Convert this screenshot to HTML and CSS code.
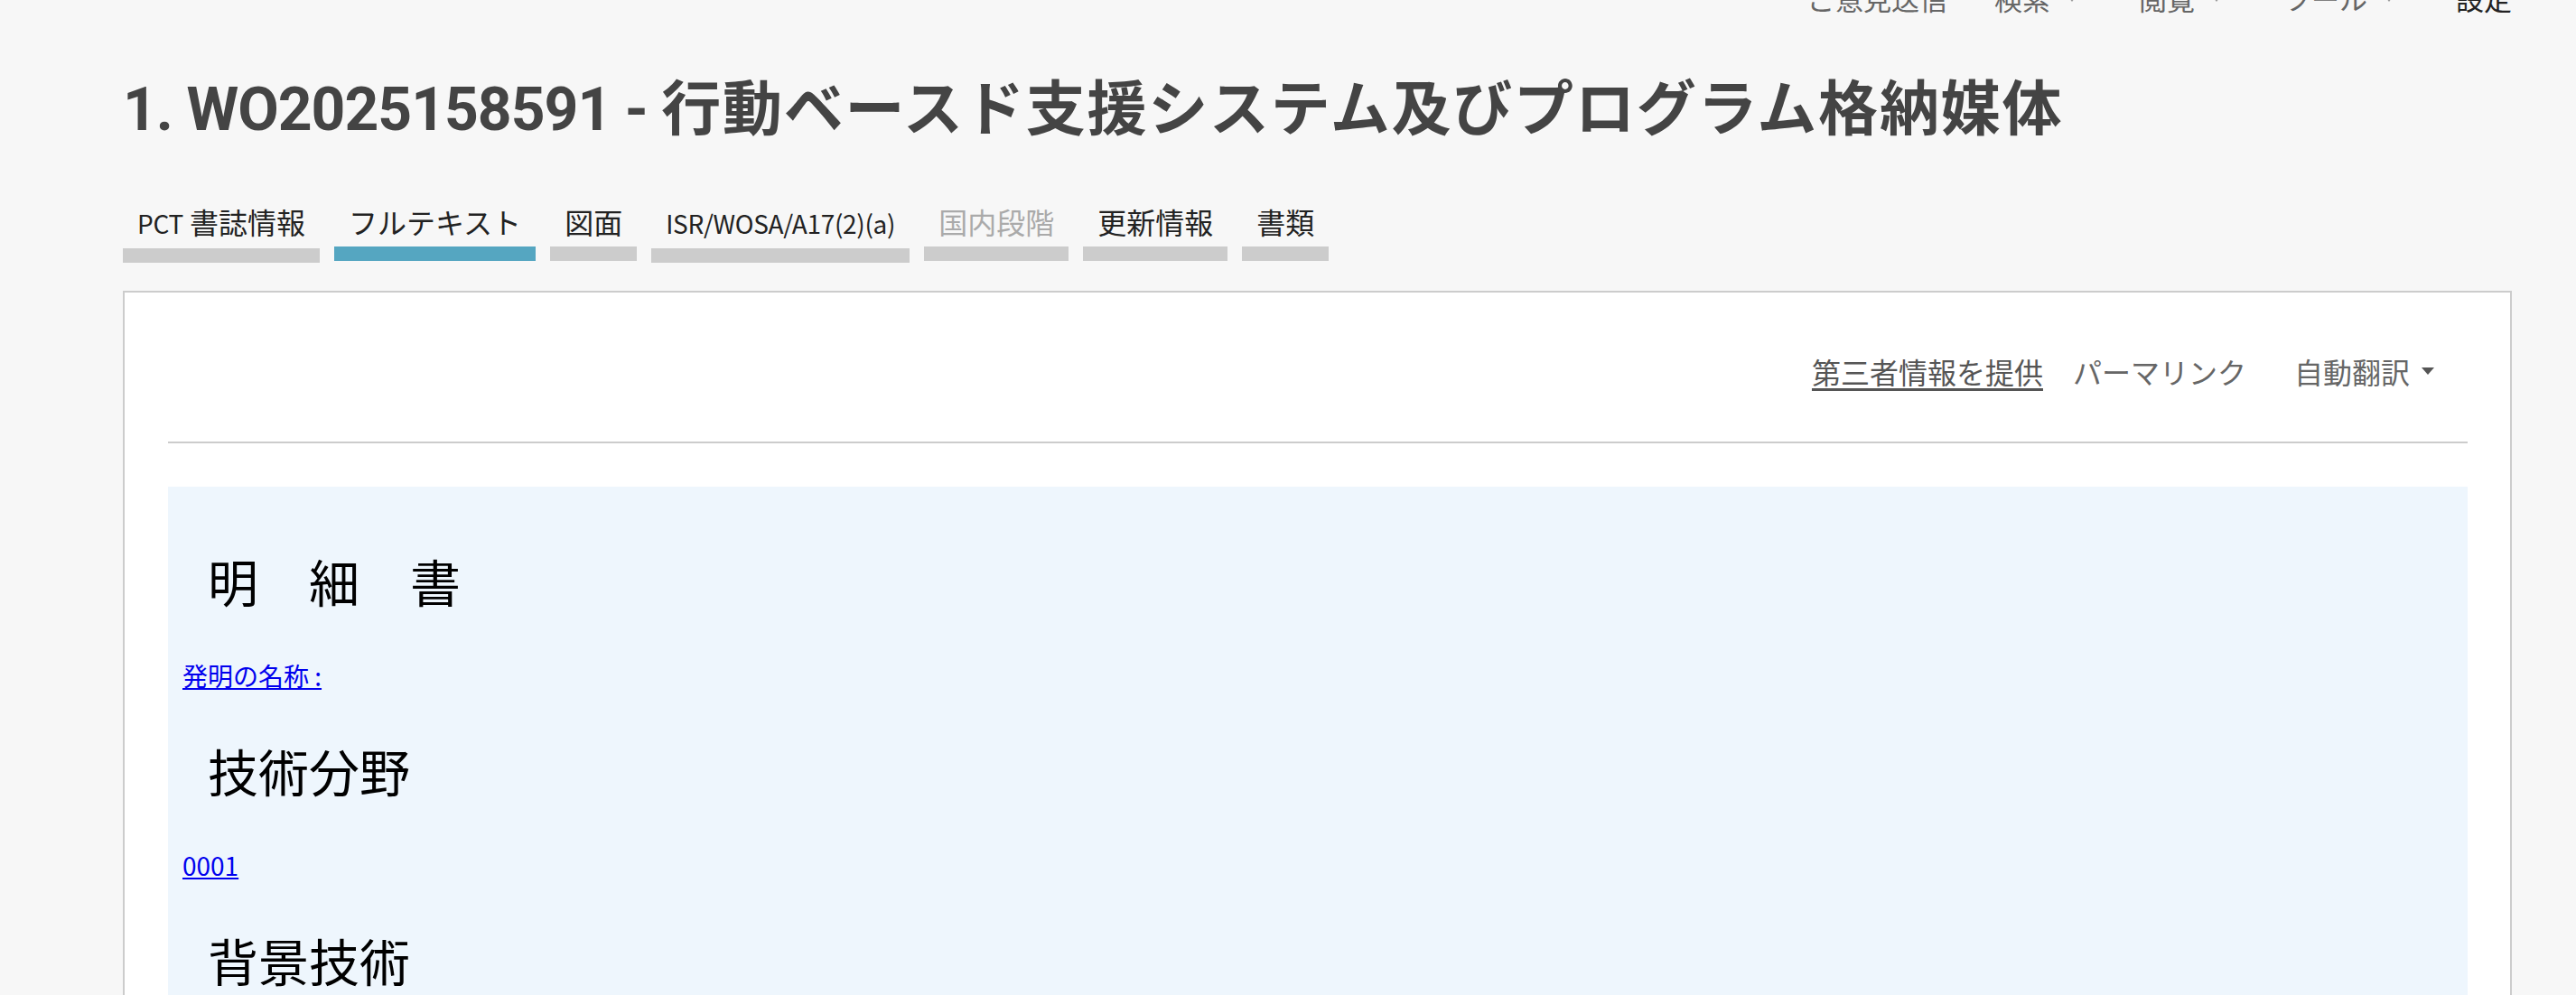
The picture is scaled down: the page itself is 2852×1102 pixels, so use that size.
FILE: index.html
```html
<!DOCTYPE html>
<html lang="ja">
<head>
<meta charset="utf-8">
<title>WO2025158591 - 行動ベースド支援システム及びプログラム格納媒体</title>
<link rel="stylesheet" href="styles.css">
</head>
<body>
<div class="page">
  <nav class="topnav">
    <a class="nav-item">ご意見送信</a>
    <a class="nav-item has-menu">検索<svg class="caret" viewBox="0 0 12 8" width="12" height="8"><path d="M0 0h12L6 8z"/></svg></a>
    <a class="nav-item has-menu">閲覧<svg class="caret" viewBox="0 0 12 8" width="12" height="8"><path d="M0 0h12L6 8z"/></svg></a>
    <a class="nav-item has-menu">ツール<svg class="caret" viewBox="0 0 12 8" width="12" height="8"><path d="M0 0h12L6 8z"/></svg></a>
    <a class="nav-item nav-strong">設定</a>
  </nav>

  <h1 class="title"><span class="pubno">1. WO2025158591 - </span>行動ベースド支援システム及びプログラム格納媒体</h1>

  <div class="tabs">
    <a class="tab"><span class="tab-label"><span class="lat">PCT</span> 書誌情報</span><span class="tab-bar"></span></a>
    <a class="tab active"><span class="tab-label">フルテキスト</span><span class="tab-bar"></span></a>
    <a class="tab"><span class="tab-label">図面</span><span class="tab-bar"></span></a>
    <a class="tab"><span class="tab-label"><span class="lat">ISR/WOSA/A17(2)(a)</span></span><span class="tab-bar"></span></a>
    <a class="tab disabled"><span class="tab-label">国内段階</span><span class="tab-bar"></span></a>
    <a class="tab"><span class="tab-label">更新情報</span><span class="tab-bar"></span></a>
    <a class="tab"><span class="tab-label">書類</span><span class="tab-bar"></span></a>
  </div>

  <section class="card">
    <div class="toolbar">
      <a class="tool-link">第三者情報を提供</a>
      <a class="tool-item perma">パーマリンク</a>
      <a class="tool-item translate">自動翻訳<svg class="tool-caret" viewBox="0 0 14 8" width="14" height="8"><path d="M0 0h14L7 8z"/></svg></a>
    </div>
    <hr class="divider">
    <div class="doc">
      <h2 class="doc-heading">明　細　書</h2>
      <p class="doc-para"><a class="doc-link" href="#">発明の名称 :</a></p>
      <h2 class="doc-heading">技術分野</h2>
      <p class="doc-para"><a class="doc-link" href="#">0001</a></p>
      <h2 class="doc-heading">背景技術</h2>
      <p class="doc-para"><a class="doc-link" href="#">0002</a></p>
      <p class="doc-para">本開示は、行動ベースド支援システム及びプログラム格納媒体に関する。</p>
    </div>
  </section>
</div>
</body>
</html>
```

FILE: styles.css
```css
html, body {
  margin: 0;
  padding: 0;
  background: #f7f7f7;
}

body {
  font-family: "Noto Sans CJK JP", "Noto Sans", sans-serif;
  color: #222;
  overflow: hidden;
}

.page {
  margin: 0 71px 0 136px;
}

/* top navigation (partly scrolled out of view) */
.topnav {
  display: flex;
  justify-content: flex-end;
  align-items: center;
  gap: 52px;
  height: 40px;
  margin-top: -22px;
  font-size: 31px;
  line-height: 40px;
}

.nav-item {
  display: flex;
  align-items: center;
  color: #666;
  text-decoration: none;
}

.nav-item.has-menu {
  padding-right: 16px;
}

.nav-strong {
  color: #222;
}

.caret {
  margin-left: 18px;
  fill: #9a9a9a;
}

/* title */
.title {
  margin: 64px 0 0;
  font-family: Roboto, "Noto Sans CJK JP", sans-serif;
  font-weight: 700;
  font-size: 66px;
  line-height: 80px;
  letter-spacing: 1.8px;
  color: #444;
  white-space: nowrap;
}

.pubno {
  letter-spacing: -1px;
}

/* tabs */
.tabs {
  display: flex;
  gap: 16px;
  margin-top: 63px;
}

.tab {
  display: flex;
  flex-direction: column;
  color: #222;
  text-decoration: none;
}

.tab-label {
  padding: 0 16px;
  font-size: 32px;
  line-height: 40px;
  white-space: nowrap;
}

.lat {
  font-size: 28px;
  letter-spacing: -0.3px;
}

.tab-bar {
  height: 16px;
  margin-top: 8px;
  background: #cccccc;
}

.tab.active .tab-bar {
  background: #55a6c1;
}

.tab.disabled {
  color: #aaaaaa;
}

/* main card */
.card {
  margin-top: 31px;
  background: #fff;
  border: 2px solid #cccccc;
  padding: 0 47px 0 48px;
  height: 1200px;
}

.toolbar {
  display: flex;
  justify-content: flex-end;
  align-items: center;
  padding: 63px 37px 0 0;
  font-size: 32px;
  line-height: 48px;
  color: #666;
}

.tool-link {
  color: #555;
  text-decoration: underline;
  text-underline-offset: 5px;
}

.tool-item {
  display: flex;
  align-items: center;
  color: #666;
}

.perma {
  margin-left: 33px;
}

.translate {
  margin-left: 53px;
}

.tool-caret {
  margin-left: 13px;
  fill: #555;
}

.divider {
  margin: 54px 0 0;
  border: 0;
  height: 2px;
  background: #cccccc;
}

/* document body */
.doc {
  margin-top: 48px;
  background: #eef6fd;
  padding: 69px 16px 40px;
}

.doc-heading {
  margin: 0 0 50px;
  padding-left: 28px;
  font-size: 56px;
  line-height: 70px;
  font-weight: 400;
  color: #000;
}

.doc-para {
  margin: 0 0 50px;
  font-size: 28px;
  line-height: 40px;
  color: #000;
}

.doc-link {
  color: #0000ee;
  text-decoration: underline;
}
```
